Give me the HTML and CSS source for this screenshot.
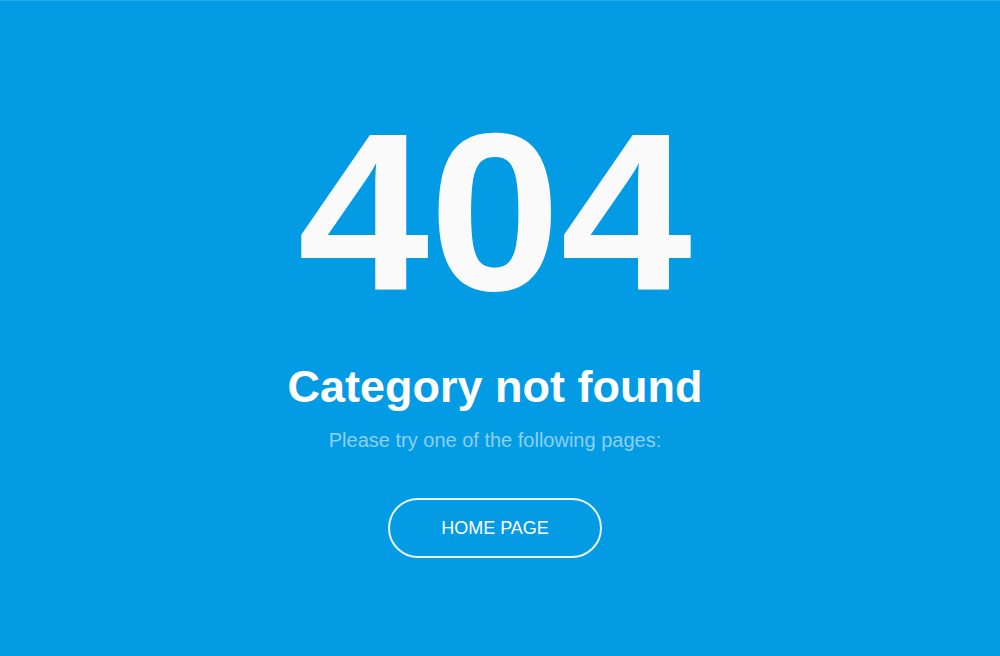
FILE: index.html
```html
<!DOCTYPE html>
<html lang="en">
<head>
<meta charset="utf-8">
<title>404 - Category not found</title>
<link rel="stylesheet" href="styles.css">
</head>
<body>
<main class="page">
  <h1 class="code">404</h1>
  <h2 class="title">Category not found</h2>
  <p class="subtitle">Please try one of the following pages:</p>
  <a class="btn" href="#">HOME PAGE</a>
</main>
</body>
</html>
```
FILE: styles.css
```css
html, body {
  margin: 0;
  padding: 0;
  height: 100%;
}
body {
  background: #049be5;
  font-family: "Liberation Sans", Arial, sans-serif;
  color: #fafafa;
}
.page {
  display: flex;
  flex-direction: column;
  align-items: center;
  padding: 95px 10px 0 0;
  height: 656px;
  box-sizing: border-box;
  border-top: 1px solid #2aa8ea;
}
.code {
  margin: 4px 0 0;
  font-size: 224px;
  line-height: 224px;
  font-weight: 700;
  color: #fafafa;
  transform: scaleX(1.055);
}
.title {
  margin: 40px 0 0;
  font-size: 45px;
  line-height: 45px;
  font-weight: 700;
  color: #ffffff;
}
.subtitle {
  margin: 21px 0 0;
  font-size: 20px;
  line-height: 20px;
  color: #8dd0f3;
}
.btn {
  margin-top: 48px;
  width: 214px;
  height: 60px;
  box-sizing: border-box;
  border: 2px solid #e9f6fd;
  border-radius: 30px;
  display: flex;
  align-items: center;
  justify-content: center;
  color: #ffffff;
  text-decoration: none;
  font-size: 18px;
}
```
